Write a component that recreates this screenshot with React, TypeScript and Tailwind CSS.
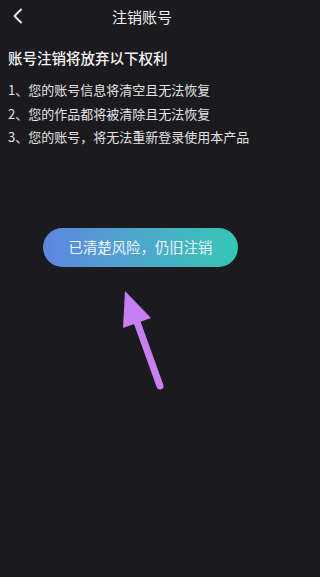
const RIGHTS = [
  "1、您的账号信息将清空且无法恢复",
  "2、您的作品都将被清除且无法恢复",
  "3、您的账号，将无法重新登录使用本产品",
];

const font = {
  fontFamily: '"Noto Sans CJK SC", "Noto Sans", sans-serif',
};

export default function App() {
  return (
    <div className="min-h-[577px] w-full bg-[#1b1a1f]">
      <div className="min-h-[577px] w-[284px] bg-[#1b1a1f] text-[#f2f2f2]" style={font}>
        {/* Header */}
        <div className="grid h-[32px] grid-cols-[40px_1fr_40px] items-center">
          <button className="flex items-center pl-[11px]">
            <svg width="14" height="18" viewBox="0 0 14 18" fill="none">
              <polyline
                points="10,2.5 3.5,9 10,15.5"
                stroke="#e6e6e6"
                strokeWidth="2"
                strokeLinecap="round"
                strokeLinejoin="round"
              />
            </svg>
          </button>
          <h1 className="text-center text-[15px] leading-none text-[#f0f0f0]">注销账号</h1>
          <div />
        </div>

        {/* Rights */}
        <div className="px-[8px] pt-[16px]">
          <h2 className="text-[14.5px] font-medium leading-[20px] text-[#f4f4f4]">
            账号注销将放弃以下权利
          </h2>
          <ul className="mt-[10px]">
            {RIGHTS.map((item) => (
              <li key={item} className="text-[13px] leading-[23.5px] text-[#e2e2e2]">
                {item}
              </li>
            ))}
          </ul>
        </div>

        {/* Confirm button */}
        <button className="ml-[43px] mt-[79px] flex h-[39px] w-[195px] items-center justify-center rounded-full bg-gradient-to-r from-[#5c86e0] to-[#33c6b3] text-[14.4px] text-[#eef4ff]">
          已清楚风险，仍旧注销
        </button>

        {/* Pointing arrow */}
        <svg className="ml-[115px] mt-[19px] block" width="55" height="106" viewBox="0 0 55 106">
          <polygon points="10,5 8,42 36,32" fill="#c77ff2" />
          <line x1="22" y1="36" x2="45" y2="100" stroke="#c77ff2" strokeWidth="7" strokeLinecap="round" />
        </svg>
      </div>
    </div>
  );
}
